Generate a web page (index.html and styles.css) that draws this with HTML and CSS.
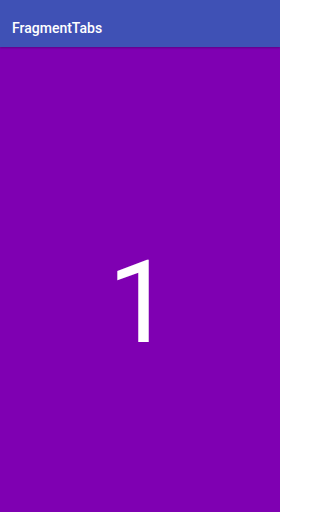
FILE: index.html
```html
<!DOCTYPE html>
<html>
<head>
<meta charset="utf-8">
<link rel="stylesheet" href="styles.css">
</head>
<body>
<div class="app">
  <header class="appbar"><span class="title">FragmentTabs</span></header>
  <main class="content"><span class="num">1</span></main>
</div>
</body>
</html>
```
FILE: styles.css
```css
html, body { margin: 0; padding: 0; }
body { width: 280px; height: 512px; overflow: hidden; font-family: Roboto, "Noto Sans", sans-serif; }
.app { display: flex; flex-direction: column; height: 512px; }
.appbar { height: 47px; box-sizing: border-box; background: #3f51b5; display: flex; align-items: center; padding: 9px 0 0 12px; box-shadow: 0 1px 2px rgba(0,0,0,0.25); position: relative; z-index: 1; }
.title { color: #fff; font-size: 14px; font-weight: 500; }
.content { flex: 1; background: #7f00b2; display: flex; align-items: center; justify-content: center; padding-top: 46px; }
.num { color: #fff; font-size: 115px; line-height: 1; }
```
